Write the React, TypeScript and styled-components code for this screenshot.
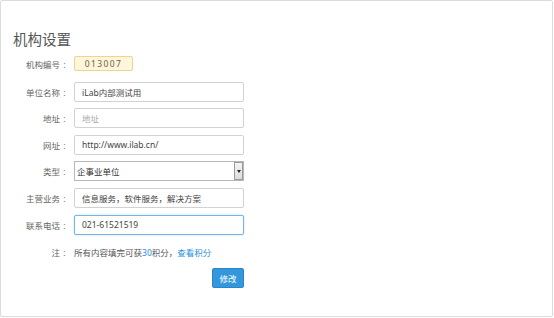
import React from 'react';
import styled, { createGlobalStyle } from 'styled-components';

const GlobalStyle = createGlobalStyle`
  html, body {
    margin: 0;
    padding: 0;
    background: #ffffff;
  }
  body {
    font-family: "Noto Sans", "Noto Sans CJK SC", sans-serif;
  }
`;

const Panel = styled.div`
  box-sizing: border-box;
  width: 553px;
  height: 317px;
  border: 1px solid #dcdcdc;
  border-radius: 2px;
  background: #fff;
  padding: 29px 0 0 12px;
`;

const Title = styled.h2`
  margin: 0 0 7px 0;
  height: 19px;
  line-height: 19px;
  font-size: 14.5px;
  font-weight: normal;
  color: #555;
`;

const Form = styled.div`
  display: flex;
  flex-direction: column;
  gap: 6.6px;
  margin-left: -12px;
`;

const Row = styled.div<{ $h?: number; $before?: number; $after?: number }>`
  display: grid;
  grid-template-columns: 68px 170px;
  column-gap: 5px;
  align-items: center;
  height: ${p => p.$h ?? 20}px;
  margin-top: ${p => p.$before ?? 0}px;
  margin-bottom: ${p => p.$after ?? 0}px;
`;

const Label = styled.label`
  text-align: right;
  font-size: 8.5px;
  color: #666;
  white-space: nowrap;
`;

const Colon = styled.span`
  display: inline-block;
  width: 9px;
  text-align: center;
`;

const CodeBox = styled.span`
  box-sizing: border-box;
  width: 59px;
  height: 15px;
  line-height: 13px;
  border: 1px solid #f0d48c;
  border-radius: 2px;
  background: #fdf6dc;
  color: #6e6240;
  font-size: 8.5px;
  letter-spacing: 1.4px;
  text-align: center;
`;

const Input = styled.input<{ $focus?: boolean }>`
  box-sizing: border-box;
  width: 170px;
  height: 20px;
  padding: 0 7px;
  border: 1px solid ${p => (p.$focus ? '#78b4e6' : '#d2d2d2')};
  border-radius: 2px;
  box-shadow: ${p => (p.$focus ? '0 0 2px rgba(102,175,233,0.5)' : 'none')};
  font-family: inherit;
  font-size: 8.5px;
  color: #444;
  outline: none;
  &::placeholder {
    color: #aaa;
  }
`;

const SelectWrap = styled.div`
  position: relative;
  width: 170px;
  height: 20px;
`;

const Select = styled.select`
  box-sizing: border-box;
  appearance: none;
  display: block;
  width: 100%;
  height: 20px;
  padding: 0 2px;
  border: 1px solid #b8b8b8;
  border-radius: 0;
  background: #fff;
  font-family: inherit;
  font-size: 8.5px;
  color: #333;
  outline: none;
`;

const Arrow = styled.span`
  position: absolute;
  top: 1px;
  right: 1px;
  box-sizing: border-box;
  width: 9px;
  height: 18px;
  border: 1px solid #9a9a9a;
  background: linear-gradient(#f4f4f4, #dcdcdc);
  pointer-events: none;
  &::after {
    content: '';
    position: absolute;
    left: 1.5px;
    top: 7px;
    border-left: 2.5px solid transparent;
    border-right: 2.5px solid transparent;
    border-top: 3px solid #222;
  }
`;

const Note = styled.div`
  font-size: 8.5px;
  color: #555;
  white-space: nowrap;
`;

const Blue = styled.a`
  color: #2a8fd8;
  text-decoration: none;
`;

const Button = styled.button`
  justify-self: end;
  box-sizing: border-box;
  width: 32px;
  height: 20px;
  border: 1px solid #2a86c8;
  border-radius: 2px;
  background: #3398db;
  color: #fff;
  font-family: inherit;
  font-size: 8.5px;
  padding: 0;
`;

const Field: React.FC<{ label: string; children?: React.ReactNode }> = ({ label, children }) => (
  <Row>
    <Label>
      {label}
      <Colon>:</Colon>
    </Label>
    {children}
  </Row>
);

const App: React.FC = () => (
  <>
    <GlobalStyle />
    <Panel>
      <Title>机构设置</Title>
      <Form>
        <Row $h={15} $after={4}>
          <Label>
            机构编号<Colon>:</Colon>
          </Label>
          <CodeBox>013007</CodeBox>
        </Row>
        <Field label="单位名称">
          <Input defaultValue="iLab内部测试用" />
        </Field>
        <Field label="地址">
          <Input placeholder="地址" />
        </Field>
        <Field label="网址">
          <Input defaultValue="http://www.ilab.cn/" />
        </Field>
        <Field label="类型">
          <SelectWrap>
            <Select defaultValue="企事业单位">
              <option>企事业单位</option>
            </Select>
            <Arrow />
          </SelectWrap>
        </Field>
        <Field label="主营业务">
          <Input defaultValue="信息服务，软件服务，解决方案" />
        </Field>
        <Field label="联系电话">
          <Input $focus defaultValue="021-61521519" />
        </Field>
        <Row $h={14} $before={3.8}>
          <Label>
            注<Colon>:</Colon>
          </Label>
          <Note>
            所有内容填完可获<Blue>30</Blue>积分，<Blue>查看积分</Blue>
          </Note>
        </Row>
        <Row $before={2.4}>
          <span />
          <Button>修改</Button>
        </Row>
      </Form>
    </Panel>
  </>
);

export default App;
